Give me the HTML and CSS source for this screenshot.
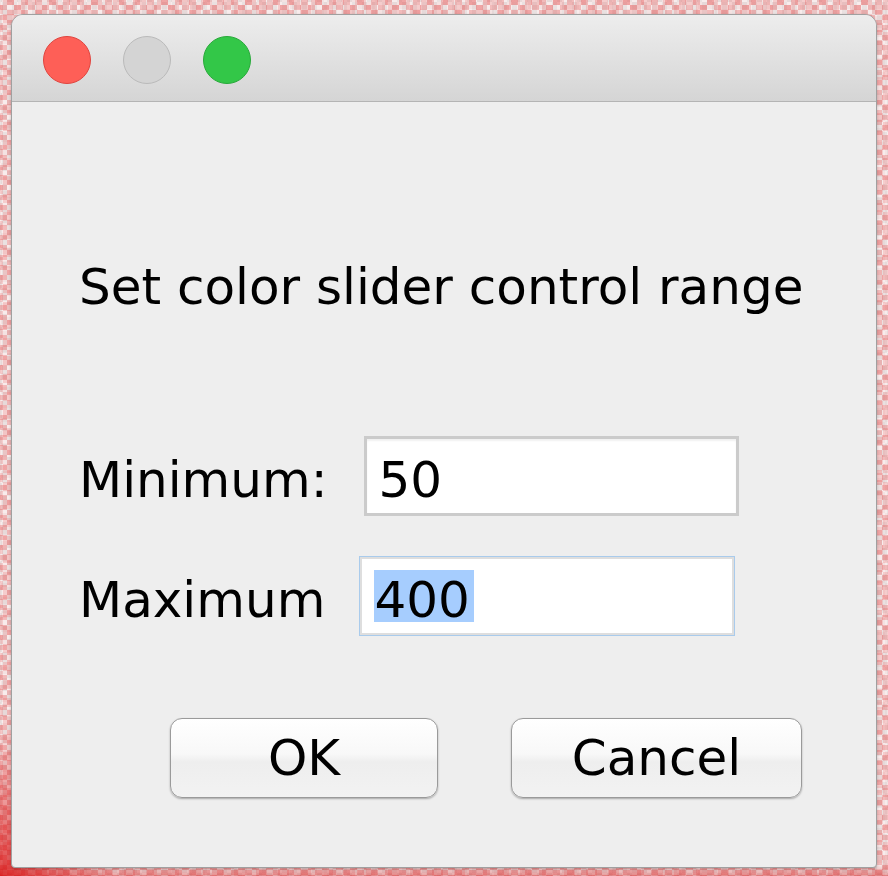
FILE: index.html
```html
<!DOCTYPE html>
<html lang="en">
<head>
<meta charset="utf-8">
<title>Set color slider control range</title>
<link rel="stylesheet" href="styles.css">
</head>
<body>
<div class="window">
  <div class="titlebar">
    <span class="light light-red"></span>
    <span class="light light-grey"></span>
    <span class="light light-green"></span>
  </div>
  <div class="content">
    <p class="heading">Set color slider control range</p>
    <div class="row row-min">
      <span class="label">Minimum:</span>
      <div class="field">50</div>
    </div>
    <div class="row row-max">
      <span class="label">Maximum</span>
      <div class="field field-focus"><span class="sel">400</span></div>
    </div>
    <div class="buttons">
      <button class="btn btn-ok" type="button">OK</button>
      <button class="btn btn-cancel" type="button">Cancel</button>
    </div>
  </div>
</div>
</body>
</html>
```

FILE: styles.css
```css
html, body {
  margin: 0;
  height: 100%;
}

body {
  box-sizing: border-box;
  padding: 14px 0 0 11px;
  overflow: hidden;
  font-family: "DejaVu Sans", "Liberation Sans", sans-serif;
  background-color: #f4e2e2;
  background-image:
    radial-gradient(ellipse 110px 150px at 0% 100%, rgba(215, 0, 0, 0.7), rgba(215, 0, 0, 0) 100%),
    linear-gradient(0deg, rgba(200, 20, 20, 0.35), rgba(200, 20, 20, 0) 12px),
    repeating-conic-gradient(rgba(225, 60, 60, 0.28) 0 25%, rgba(0, 0, 0, 0) 0 50%),
    repeating-conic-gradient(rgba(235, 110, 110, 0.25) 0 25%, rgba(0, 0, 0, 0) 0 50%),
    repeating-conic-gradient(rgba(190, 190, 190, 0.25) 0 25%, rgba(0, 0, 0, 0) 0 50%),
    repeating-conic-gradient(rgba(255, 255, 255, 0.35) 0 25%, rgba(0, 0, 0, 0) 0 50%);
  background-size: auto, auto, 14px 10px, 22px 18px, 10px 26px, 34px 14px;
  background-position: 0 0, 0 0, 0 0, 3px 5px, 7px 2px, 1px 9px;
}

.window {
  box-sizing: border-box;
  width: 866px;
  height: 854px;
  border: 1px solid #a0a0a0;
  border-radius: 12px 12px 4px 4px;
  background: #eeeeee;
  overflow: hidden;
  display: flex;
  flex-direction: column;
  box-shadow: 0 1px 3px rgba(0, 0, 0, 0.2);
}

.titlebar {
  flex: none;
  box-sizing: content-box;
  height: 65px;
  padding: 21px 0 0 31px;
  border-bottom: 1px solid #b4b4b4;
  background: linear-gradient(#ededed, #e6e6e6 30%, #d5d5d5);
  display: flex;
  align-items: flex-start;
  gap: 32px;
}

.light {
  width: 48px;
  height: 48px;
  box-sizing: border-box;
  border-radius: 50%;
  border: 1px solid;
}

.light-red {
  background: #fe5f57;
  border-color: #e0443e;
}

.light-grey {
  background: #d4d4d4;
  border-color: #bababa;
}

.light-green {
  background: #33c748;
  border-color: #28a93a;
}

.content {
  padding: 155px 0 0 67px;
  color: #000;
}

.heading {
  margin: 0;
  font-size: 50px;
  line-height: 60px;
}

.row {
  display: flex;
  align-items: baseline;
  font-size: 50px;
  line-height: 60px;
}

.row-min {
  margin-top: 119px;
  gap: 36px;
}

.row-max {
  margin-top: 40px;
  gap: 34px;
}

.field {
  box-sizing: border-box;
  height: 80px;
  background: #ffffff;
  white-space: nowrap;
}

.row-min .field {
  width: 375px;
  border: 3px solid #cbcbcb;
  padding: 11px 0 0 12px;
  box-shadow: inset 0 2px 2px rgba(0, 0, 0, 0.06);
}

.field-focus {
  width: 376px;
  border: 1px solid #a9cbec;
  box-shadow: inset 0 0 0 2px #dedede;
  padding: 13px 0 0 14px;
}

.sel {
  display: inline-block;
  height: 52px;
  line-height: 60px;
  background: #a6cdfe;
  padding-right: 4px;
}

.buttons {
  display: flex;
  gap: 73px;
  margin-top: 82px;
  padding-left: 91px;
}

.btn {
  height: 80px;
  box-sizing: border-box;
  padding: 0;
  border: 1px solid #9a9a9a;
  border-radius: 12px;
  background: linear-gradient(#ffffff, #f8f8f8 45%, #eeeeee 55%, #f2f2f2);
  box-shadow: 0 1px 2px rgba(0, 0, 0, 0.3);
  font-family: "DejaVu Sans", "Liberation Sans", sans-serif;
  font-size: 50px;
  line-height: 1;
  color: #000;
}

.btn-ok {
  width: 268px;
}

.btn-cancel {
  width: 291px;
}
```
